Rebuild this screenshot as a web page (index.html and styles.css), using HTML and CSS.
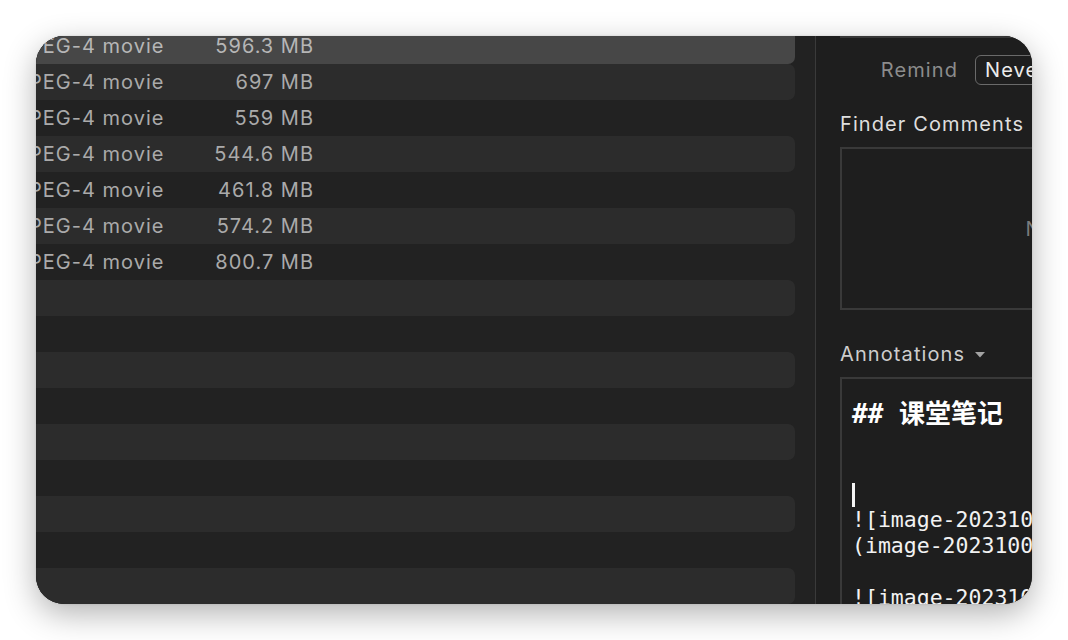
FILE: index.html
```html
<!DOCTYPE html>
<html lang="en">
<head>
<meta charset="utf-8">
<title>Info</title>
<link rel="stylesheet" href="styles.css">
</head>
<body>
<div class="window">
  <section class="files">
    <div class="list">
      <div class="row selected"><span class="kind">MPEG-4 movie</span><span class="size">596.3 MB</span></div>
      <div class="row stripe"><span class="kind">MPEG-4 movie</span><span class="size">697 MB</span></div>
      <div class="row"><span class="kind">MPEG-4 movie</span><span class="size">559 MB</span></div>
      <div class="row stripe"><span class="kind">MPEG-4 movie</span><span class="size">544.6 MB</span></div>
      <div class="row"><span class="kind">MPEG-4 movie</span><span class="size">461.8 MB</span></div>
      <div class="row stripe"><span class="kind">MPEG-4 movie</span><span class="size">574.2 MB</span></div>
      <div class="row"><span class="kind">MPEG-4 movie</span><span class="size">800.7 MB</span></div>
      <div class="row stripe"></div>
      <div class="row"></div>
      <div class="row stripe"></div>
      <div class="row"></div>
      <div class="row stripe"></div>
      <div class="row"></div>
      <div class="row stripe"></div>
      <div class="row"></div>
      <div class="row stripe"></div>
    </div>
  </section>
  <aside class="inspector">
    <div class="sep"></div>
    <div class="remind">
      <span class="remind-label">Remind</span>
      <button class="popup">Never</button>
    </div>
    <h2 class="label">Finder Comments</h2>
    <div class="comment-box"><span class="placeholder">No Comments</span></div>
    <h2 class="label dim">Annotations<svg class="caret" width="10" height="6" viewBox="0 0 10 6"><path d="M0 0h10L5 5.5z" fill="#a3a3a3"/></svg></h2>
    <div class="anno-box">
      <div class="md-heading">## 课堂笔记</div>
      <div class="md-line"></div>
      <div class="md-line"></div>
      <div class="md-line"><span class="cursor"></span></div>
      <div class="md-line">![image-20231008214517321]</div>
      <div class="md-line">(image-20231008214517321.png)</div>
      <div class="md-line"></div>
      <div class="md-line">![image-20231008214602118]</div>
    </div>
  </aside>
</div>
</body>
</html>
```
FILE: styles.css
```css
* { box-sizing: border-box; }
html, body { margin: 0; padding: 0; background: #ffffff; }
body {
  font-family: Inter, "Noto Sans", "Liberation Sans", sans-serif;
  width: 1068px;
  height: 640px;
  overflow: hidden;
  padding: 36px;
}
.window {
  width: 996px;
  height: 568px;
  border-radius: 28px;
  overflow: hidden;
  display: flex;
  background: #1e1e1e;
  box-shadow: 0 10px 32px rgba(0, 0, 0, 0.30), 0 0 2px rgba(0,0,0,0.15);
}
.files {
  flex: none;
  width: 780px;
  background: #222222;
  border-right: 1px solid #3a3a3a;
  padding-right: 20px;
}
.list {
  margin-top: -8px;
  margin-left: -30px;
}
.row {
  height: 36px;
  display: flex;
  align-items: center;
  padding-left: 4px;
  border-radius: 7px;
  color: #aaaaaa;
  font-size: 20px;
  letter-spacing: 1px;
}
.row.stripe { background: #2c2c2c; }
.row.selected { background: #474747; color: #b6b6b6; }
.kind { width: 180px; white-space: nowrap; }
.size { width: 124px; text-align: right; white-space: nowrap; }

.inspector {
  flex: none;
  width: 566px;
  padding: 0 24px;
  background: #1e1e1e;
  letter-spacing: 1.1px;
}
.sep { height: 2px; background: #383838; }
.remind {
  margin-top: 17px;
  display: grid;
  grid-template-columns: 118px auto;
  column-gap: 17px;
  align-items: center;
  justify-content: start;
}
.remind-label {
  text-align: right;
  color: #8c8c8c;
  font-size: 20px;
}
.popup {
  height: 30px;
  padding: 0 9px;
  border: 1.5px solid #6a6a6a;
  border-radius: 6px;
  background: transparent;
  color: #ececec;
  font-family: inherit;
  font-size: 20px;
  letter-spacing: 1.1px;
  line-height: 26px;
}
.label {
  margin: 27px 0 0;
  font-size: 20px;
  font-weight: 400;
  line-height: 24px;
  color: #dedede;
  display: flex;
  align-items: center;
  white-space: pre;
}
.label.dim { color: #cdcdcd; margin-top: 32px; }
.caret { margin-left: 10px; margin-top: 1px; }
.comment-box {
  margin-top: 11px;
  height: 163px;
  border: 2px solid #393939;
  display: flex;
  align-items: center;
  justify-content: center;
}
.placeholder { color: #7a7a7a; font-size: 20px; }
.anno-box {
  margin-top: 11px;
  height: 300px;
  border: 2px solid #393939;
  padding: 20px 10px 0;
  font-family: "DejaVu Sans Mono", "Noto Sans CJK SC", monospace;
  letter-spacing: 0;
  color: #f2f2f2;
  overflow: hidden;
}
.md-heading {
  font-size: 26px;
  font-weight: 700;
  line-height: 30px;
  color: #ffffff;
  white-space: pre;
}
.md-line {
  font-size: 21.5px;
  line-height: 26px;
  height: 26px;
  white-space: pre;
}
.cursor {
  display: inline-block;
  width: 3px;
  height: 24px;
  margin-top: 2px;
  background: #f4f4f4;
  vertical-align: top;
}
```
